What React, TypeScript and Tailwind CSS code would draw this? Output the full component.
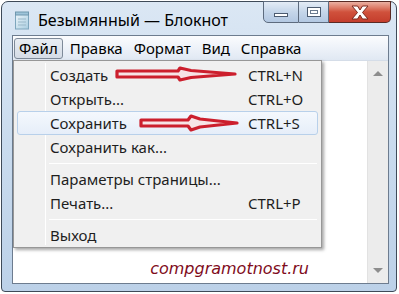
import React from "react";

const ff = { fontFamily: '"Noto Sans", "Open Sans", sans-serif' };

function NotepadIcon() {
  return (
    <svg width="16" height="20" viewBox="0 0 16 20">
      <defs>
        <linearGradient id="np" x1="0" y1="0" x2="1" y2="1">
          <stop offset="0" stopColor="#eef6fb" />
          <stop offset="1" stopColor="#a9cde0" />
        </linearGradient>
      </defs>
      <rect x="1.5" y="3" width="13" height="16" fill="url(#np)" stroke="#7ea6bd" />
      <rect x="1.5" y="2" width="13" height="3" fill="#9ec4d9" stroke="#6f97ae" />
      <line x1="4" y1="9" x2="12" y2="9" stroke="#9ab8c9" />
      <line x1="4" y1="12" x2="12" y2="12" stroke="#9ab8c9" />
      <line x1="4" y1="15" x2="12" y2="15" stroke="#9ab8c9" />
    </svg>
  );
}

function MenuItem({
  label,
  shortcut,
  active,
}: {
  label: string;
  shortcut?: string;
  active?: boolean;
}) {
  return (
    <div
      className={
        "flex items-center h-[24px] mx-[3px] rounded-[3px] border " +
        (active
          ? "border-[#b8d0ea] bg-gradient-to-b from-[#f4f8fd] to-[#e6eef9]"
          : "border-transparent")
      }
    >
      <div className="w-[32px]" />
      <div className="flex-1 text-[15px] text-[#1e1e1e]">{label}</div>
      <div className="w-[69px] text-[15px] text-[#1e1e1e]">{shortcut}</div>
    </div>
  );
}

function Sep() {
  return (
    <div className="flex h-[8px] items-center pl-[35px] pr-[4px]">
      <div className="h-[1px] flex-1 bg-[#d7d7d7] border-b border-white" />
    </div>
  );
}

export default function App() {
  return (
    <div className="w-[399px] h-[294px] bg-white overflow-hidden relative" style={ff}>
      {/* window */}
      <div className="absolute left-[1px] top-[1px] w-[396px] h-[291px] rounded-t-[7px] rounded-b-[4px] border border-[#3e4a58] bg-gradient-to-b from-[#dbe7f4] via-[#c9dbee] to-[#bcd1e8] flex flex-col">
        {/* title bar */}
        <div className="h-[33px] flex items-start relative">
          <div className="flex items-center pl-[12px] pt-[8px] gap-[8px]">
            <NotepadIcon />
            <span className="text-[16px] text-black leading-none">Безымянный — Блокнот</span>
          </div>
          <div className="absolute right-[5px] top-[-1px] flex">
            <div className="w-[36px] h-[22px] rounded-bl-[5px] border border-[#5d6b7e] bg-gradient-to-b from-[#e4ecf6] via-[#c5d6ea] to-[#b3c8e2] flex items-center justify-center">
              <div className="w-[14px] h-[4px] mt-[6px] border border-[#4c5b70] bg-white" />
            </div>
            <div className="w-[30px] h-[22px] border-y border-r border-[#5d6b7e] bg-gradient-to-b from-[#e4ecf6] via-[#c5d6ea] to-[#b3c8e2] flex items-center justify-center">
              <div className="w-[14px] h-[10px] border border-[#4c5b70] bg-white flex items-center justify-center">
                <div className="w-[8px] h-[4px] border border-[#6c7b8e]" />
              </div>
            </div>
            <div className="w-[62px] h-[22px] rounded-br-[5px] border-y border-r border-[#5a2a24] bg-gradient-to-b from-[#eab0a2] via-[#d0513c] to-[#c43d2c] flex items-center justify-center">
              <svg width="20" height="15" viewBox="0 0 20 15">
                <path
                  d="M2 1 L7.5 1 L10 5 L12.5 1 L18 1 L12.5 7.5 L18 14 L12.5 14 L10 10 L7.5 14 L2 14 L7.5 7.5 Z"
                  fill="#ffffff"
                  stroke="#7a2a20"
                  strokeWidth="1"
                />
              </svg>
            </div>
          </div>
        </div>
        {/* inner */}
        <div className="flex-1 ml-[10px] mr-[7px] mb-[7px] border border-[#6d7c8f] flex flex-col bg-white">
          {/* menubar */}
          <div className="h-[25px] flex items-center bg-gradient-to-b from-[#fbfcfe] to-[#e0e8f3] border-b border-[#d5dde8] text-[15px] text-black">
            <div className="ml-[1px] h-[21px] px-[4px] flex items-center rounded-[3px] border border-[#7e8a99] bg-gradient-to-b from-[#e8edf3] to-[#d5dce6]">
              Файл
            </div>
            <div className="ml-[7px]">Правка</div>
            <div className="ml-[11px]">Формат</div>
            <div className="ml-[11px]">Вид</div>
            <div className="ml-[11px]">Справка</div>
          </div>
          {/* client */}
          <div className="flex-1 flex relative">
            <div className="flex-1 relative">
              <div
                className="absolute right-[58px] bottom-[2px] text-[16px] italic text-[#800c1c]"
                style={{ fontFamily: '"DejaVu Sans", sans-serif' }}
              >
                compgramotnost.ru
              </div>
            </div>
            <div className="w-[21px] bg-[#ececec] border-l border-[#e2e2e2] flex flex-col justify-between items-center py-[10px]">
              <div className="w-0 h-0 border-l-[5px] border-r-[5px] border-b-[5px] border-l-transparent border-r-transparent border-b-[#8d8d8d]" />
              <div className="w-0 h-0 border-l-[5px] border-r-[5px] border-t-[5px] border-l-transparent border-r-transparent border-t-[#8d8d8d]" />
            </div>
          </div>
        </div>
      </div>

      {/* dropdown */}
      <div className="absolute left-[13px] top-[60px] w-[309px] h-[188px] bg-[#f0f0f0] border border-[#979797] shadow-[2px_2px_3px_rgba(0,0,0,0.35)] pt-[2px]">
        <div className="absolute left-[31px] top-[2px] bottom-[2px] w-[1px] bg-[#e2e3e3] border-r border-white" />
        <div className="relative">
          <MenuItem label="Создать" shortcut="CTRL+N" />
          <MenuItem label="Открыть..." shortcut="CTRL+O" />
          <MenuItem label="Сохранить" shortcut="CTRL+S" active />
          <MenuItem label="Сохранить как..." />
          <Sep />
          <MenuItem label="Параметры страницы..." />
          <MenuItem label="Печать..." shortcut="CTRL+P" />
          <Sep />
          <MenuItem label="Выход" />
        </div>
      </div>

      {/* arrows */}
      <svg className="absolute left-0 top-0" width="399" height="294" viewBox="0 0 399 294">
        <path
          d="M117 71 L178 71 L180 68 L191 70.5 L235 74 L191 77.5 L180 80 L178 77 L117 77 Z"
          fill="#f7e4e6"
          stroke="#cc1f2d"
          strokeWidth="3.2"
          strokeLinejoin="round"
        />
        <path
          d="M141 120 L188 120 L191 116 L200 119 L237 123 L200 127 L191 130 L188 126 L141 126 Z"
          fill="#f7e4e6"
          stroke="#cc1f2d"
          strokeWidth="3.2"
          strokeLinejoin="round"
        />
      </svg>
    </div>
  );
}
